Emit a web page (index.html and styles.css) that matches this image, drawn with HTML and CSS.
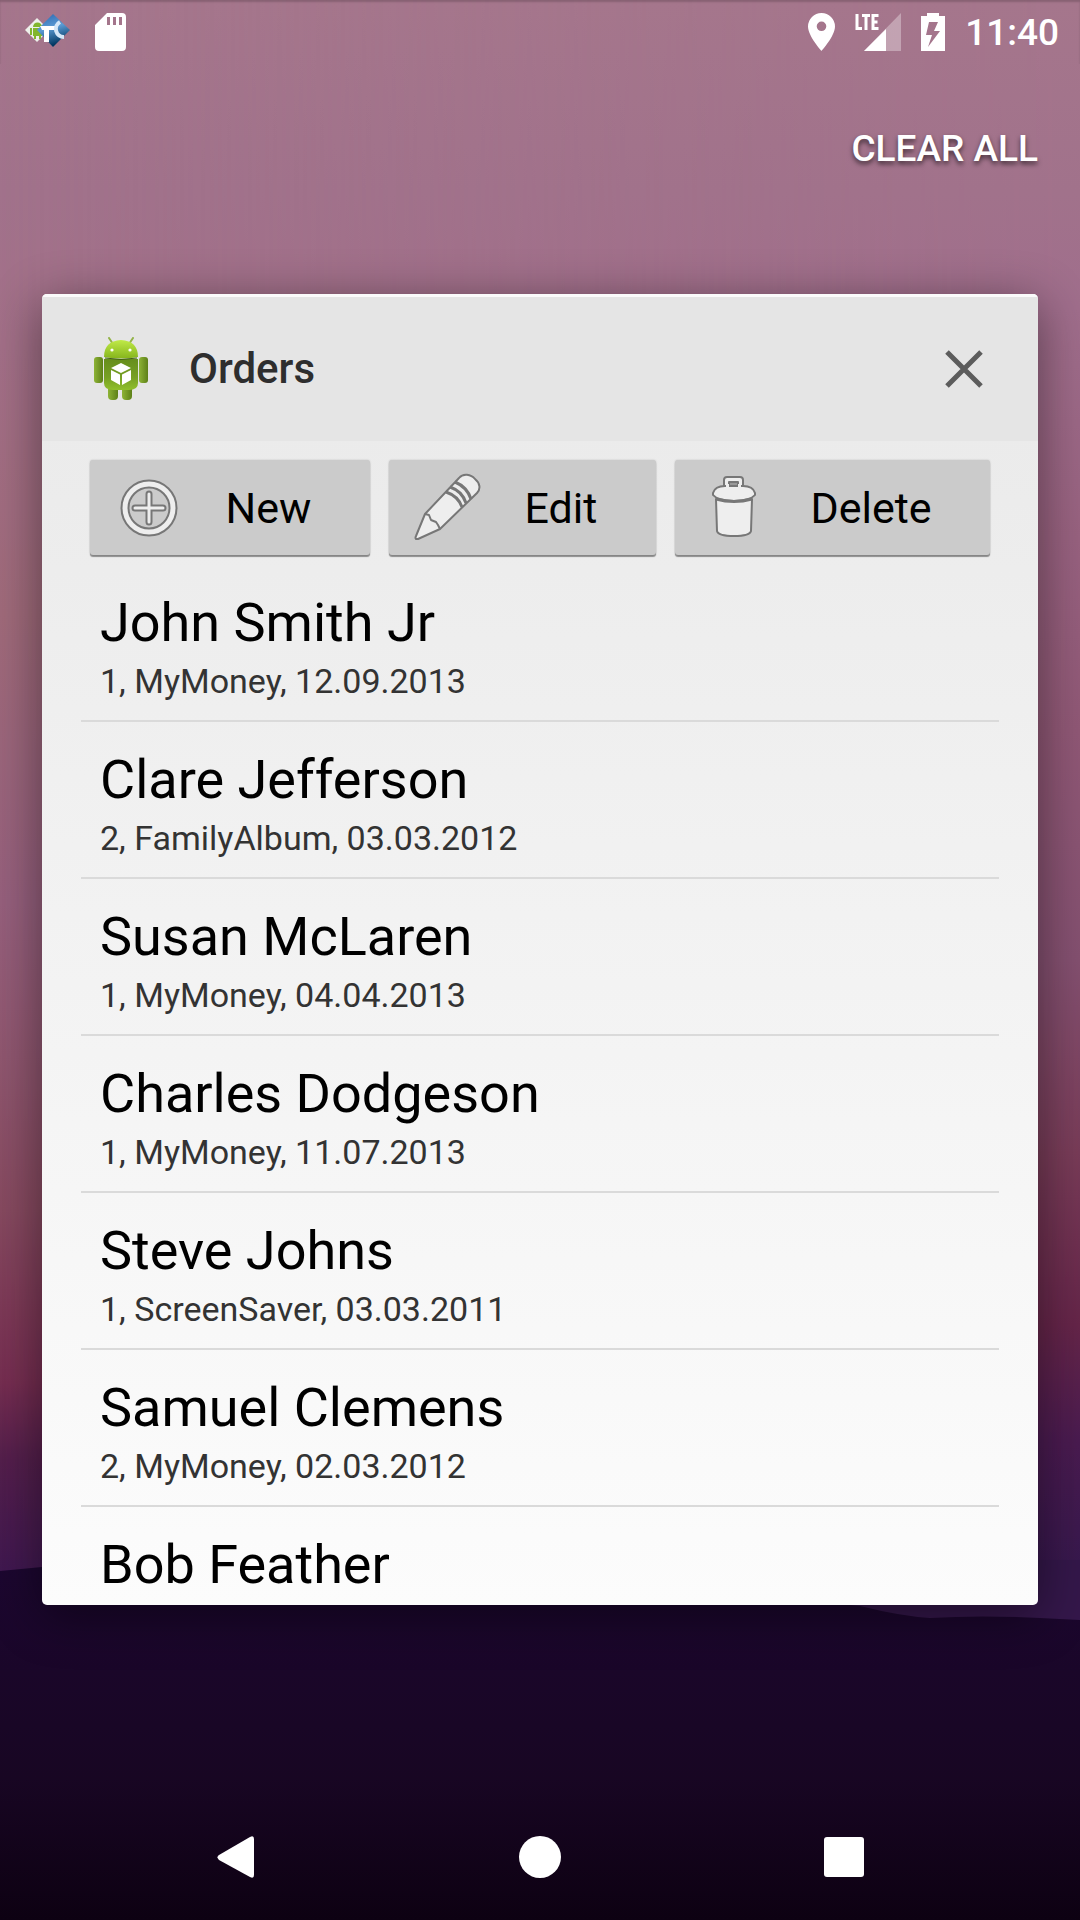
FILE: index.html
```html
<!DOCTYPE html>
<html lang="en">
<head>
<meta charset="utf-8">
<meta name="viewport" content="width=device-width, initial-scale=1">
<title>Recent apps</title>
<link rel="stylesheet" href="styles.css">
</head>
<body>
<svg class="hills" viewBox="0 0 1080 360" preserveAspectRatio="none" aria-hidden="true">
  <defs>
    <linearGradient id="hill" x1="0" y1="0" x2="0" y2="1">
      <stop offset="0" stop-color="#1c0730"/><stop offset="0.3" stop-color="#1a0629"/><stop offset="0.6" stop-color="#180623"/><stop offset="1" stop-color="#0d0112"/>
    </linearGradient>
  </defs>
  <path fill="#34174a" d="M600 0H1080V80H600Z"/>
  <path fill="url(#hill)" d="M0 11L42 7Q300 0 600 20L860 46Q900 56 930 58Q980 55 1040 58L1080 60V360H0Z"/>
</svg>
<div class="screen">
  <header class="status">
    <div class="status-group">
      <svg class="tc" viewBox="0 0 46 36" width="46" height="36" aria-hidden="true">
        <defs>
          <linearGradient id="blue" x1="0" y1="0" x2="0.3" y2="1"><stop offset="0" stop-color="#2864ae"/><stop offset="0.5" stop-color="#5c9bd4"/><stop offset="1" stop-color="#003660"/></linearGradient>
        </defs>
        <path fill="#edf0ea" d="M0 16L12 4L24 16L12 28Z"/>
        <g fill="#82b62c"><path d="M8 13a4.500 4.500 0 0 1 9 0z"/><rect x="8" y="14" width="9" height="8"/><rect x="5" y="14" width="2" height="7"/><rect x="9" y="21" width="2" height="4"/><rect x="14" y="21" width="2" height="4"/></g>
        <path fill="url(#blue)" d="M12 16L28 0L45 16L28 33Z"/>
        <path fill="#fff" d="M15 12H32L30 16H24V28H19V16H17Z"/>
        <path fill="none" stroke="#d5e7f8" stroke-width="4" d="M35 8a8 8 0 0 0 4 15"/>
      </svg>
      <svg viewBox="0 0 31 38" width="31" height="38" aria-hidden="true"><path fill="#fff" fill-rule="evenodd" d="M12 0H27Q31 0 31 4V34Q31 38 27 38H4Q0 38 0 34V12ZM12 4V12H15V4ZM18 4V12H21V4ZM24 4V12H27V4Z"/></svg>
    </div>
    <div class="status-group status-right">
      <svg viewBox="0 0 27 38" width="27" height="38" aria-hidden="true"><path fill="#fff" fill-rule="evenodd" d="M13.500 0A13.500 13.500 0 0 0 0 13.500C0 23 13.500 38 13.500 38S27 23 27 13.500A13.500 13.500 0 0 0 13.500 0ZM13.500 8.500a4.800 4.800 0 1 1 0 9.600a4.800 4.800 0 0 1 0-9.600Z"/></svg>
      <svg viewBox="0 0 46 38" width="46" height="38" role="img" aria-label="LTE signal"><path fill="#fff" opacity=".33" d="M46 0V38H9Z"/><path fill="#fff" d="M31 16V38H9Z"/><path fill="none" stroke="#fff" stroke-width="3" d="M2 1V15.500H7M7 2.500H15M11 2.500V17M23.500 2.500H18V15.500H23.500M18 9H22.500"/></svg>
      <svg viewBox="0 0 24 38" width="24" height="38" role="img" aria-label="Battery charging"><path fill="#fff" fill-rule="evenodd" d="M6 0H18V3H24V38H0V3H6ZM8 9L5 22H11L7 34L19 18H13L17 9Z"/></svg>
      <time class="clock">11:40</time>
    </div>
  </header>
  <div class="actions"><button class="clear" type="button">CLEAR ALL</button></div>
  <main class="card">
    <div class="card-head">
      <svg class="droid" viewBox="0 0 54 64" width="54" height="64" aria-hidden="true">
        <defs>
          <linearGradient id="head" x1="0" y1="0" x2="0" y2="1"><stop offset="0" stop-color="#c0ea48"/><stop offset="1" stop-color="#86b51c"/></linearGradient>
          <linearGradient id="body" x1="0" y1="0" x2="0" y2="1"><stop offset="0" stop-color="#668e1c"/><stop offset="0.600" stop-color="#77a024"/><stop offset="1" stop-color="#90bf2b"/></linearGradient>
          <linearGradient id="limb" x1="0" y1="0" x2="1" y2="0"><stop offset="0" stop-color="#8db336"/><stop offset="1" stop-color="#5d8018"/></linearGradient>
        </defs>
        <path d="M15 1L19 7M39 1L35 7" stroke="#93b348" stroke-width="2" stroke-linecap="round"/>
        <rect x="14" y="48" width="10" height="15" rx="4" fill="url(#limb)"/><rect x="28" y="48" width="10" height="15" rx="4" fill="url(#limb)"/>
        <rect x="0" y="20" width="9" height="26" rx="3" fill="url(#limb)"/><rect x="45" y="20" width="9" height="26" rx="3" fill="url(#limb)"/>
        <path fill="url(#body)" d="M10 22H44V46Q44 53 35 53H19Q10 53 10 46Z"/>
        <path fill="url(#head)" d="M10 20Q10 4 27 3Q44 4 44 20Q27 23 10 20Z"/>
        <path fill="none" stroke="#405f10" d="M11 21Q27 24 43 21"/>
        <circle cx="18" cy="13" r="1.600" fill="#fff"/><circle cx="36" cy="13" r="1.600" fill="#fff"/>
        <path fill="#fff" d="M27 26L37 31L27 36L17 31ZM17 33L26 37.500V48L17 43ZM37 33L28 37.500V48L37 43Z"/>
      </svg>
      <h1 class="title">Orders</h1>
      <button class="close" type="button" aria-label="Close"><svg viewBox="0 0 38 38" width="38" height="38" aria-hidden="true"><path d="M2 2L36 36M36 2L2 36" stroke="#5c5c5c" stroke-width="5"/></svg></button>
    </div>
    <div class="tools">
      <button class="tool" type="button">
        <svg viewBox="0 0 70 70" width="70" height="70" aria-hidden="true"><g fill="none"><circle cx="35" cy="35" r="24" stroke="#777" stroke-width="9"/><circle cx="35" cy="35" r="24" stroke="#eee" stroke-width="5"/><path d="M35 21V49M21 35H49" stroke="#777" stroke-width="7" stroke-linecap="round"/><path d="M35 21V49M21 35H49" stroke="#eee" stroke-width="3" stroke-linecap="round"/></g></svg>
        <span class="tool-label">New</span></button>
      <button class="tool" type="button">
        <svg viewBox="0 0 70 70" width="70" height="70" aria-hidden="true"><g fill="#eee" stroke="#777" stroke-width="2" stroke-linejoin="round"><path d="M3 66Q2 65 3 63L12 41L46 5C50 0 58 1 62 6C67 10 68 16 64 20L27 56L5 66Z"/><path fill="none" d="M12 41L16 42L18 47L23 49L25 52L27 56"/><path fill="none" stroke-width="3" d="M33 19Q45 23 49 34M37 14Q49 18 53 30M42 9Q54 14 58 26"/></g></svg>
        <span class="tool-label">Edit</span></button>
      <button class="tool" type="button">
        <svg viewBox="0 0 70 70" width="70" height="70" aria-hidden="true"><g fill="#eee" stroke="#777" stroke-width="2" stroke-linejoin="round"><path d="M17 26L18 58Q19 63 35 63T52 58L53 26Z"/><path d="M25 14V7Q25 4 28 4H41Q44 4 44 7V14Z"/><path fill="#999" d="M30 9H39V14H30Z"/><path d="M14 20Q16 13 26 13H44Q54 13 56 20V22Q52 27 35 28Q18 27 14 22Z"/></g><path fill="#eee" d="M27 11H30V16H27ZM39 11H42V16H39Z"/><path d="M17 26Q35 31 53 26" fill="none" stroke="#777" stroke-width="3"/></svg>
        <span class="tool-label">Delete</span></button>
    </div>
    <ul class="orders">
      <li class="order"><span class="name">John Smith Jr</span><span class="info">1, MyMoney, 12.09.2013</span></li>
      <li class="order"><span class="name">Clare Jefferson</span><span class="info">2, FamilyAlbum, 03.03.2012</span></li>
      <li class="order"><span class="name">Susan McLaren</span><span class="info">1, MyMoney, 04.04.2013</span></li>
      <li class="order"><span class="name">Charles Dodgeson</span><span class="info">1, MyMoney, 11.07.2013</span></li>
      <li class="order"><span class="name">Steve Johns</span><span class="info">1, ScreenSaver, 03.03.2011</span></li>
      <li class="order"><span class="name">Samuel Clemens</span><span class="info">2, MyMoney, 02.03.2012</span></li>
      <li class="order last"><span class="name">Bob Feather</span></li>
    </ul>
  </main>
  <nav class="nav">
    <button class="nav-btn" type="button" aria-label="Back"><svg viewBox="0 0 42 42" width="42" height="42" aria-hidden="true"><path fill="#fff" d="M4 19L35 1Q39 -1 39 3V39Q39 43 35 41L4 24Q1 21 4 19Z"/></svg></button>
    <button class="nav-btn" type="button" aria-label="Home"><svg viewBox="0 0 42 42" width="42" height="42" aria-hidden="true"><circle cx="21" cy="21" r="21" fill="#fff"/></svg></button>
    <button class="nav-btn" type="button" aria-label="Recent apps"><svg viewBox="0 0 42 42" width="42" height="42" aria-hidden="true"><rect x="1" y="1" width="40" height="40" rx="3" fill="#fff"/></svg></button>
  </nav>
</div>
</body>
</html>
```
FILE: styles.css
```css
* { box-sizing: border-box; }

html { min-height: 100%; }

body {
  margin: 0;
  min-height: 100vh;
  position: relative;
  font-family: Roboto, "Noto Sans", sans-serif;
  background: linear-gradient(#a5768c 0%, #a1728b 10%, #a37088 18%, #a06b7b 32%, #96607d 47%, #905770 55%, #874a60 63%, #762e51 72%, #541f4c 76%, #401850 82%, #0d0112 100%);
}

/* The sunset is cooler and darker towards the right edge */
body::before {
  content: "";
  position: absolute;
  inset: 0;
  background: linear-gradient(#a5768c 0%, #a1728b 10%, #a06e8c 16%, #986280 28%, #905876 38%, #845070 50%, #783c58 60%, #652549 69%, #4a1b50 75%, #36184d 82%, #0d0112 100%);
  mask-image: linear-gradient(to right, transparent, #000);
}

button {
  margin: 0;
  padding: 0;
  border: 0;
  background: none;
  font: inherit;
  color: inherit;
}

svg { display: block; flex: none; }

/* Wallpaper foreground, behind everything else */
.hills {
  position: absolute;
  left: 0;
  bottom: 0;
  width: 100%;
  height: 360px;
}

.screen {
  position: relative;
  display: flex;
  flex-direction: column;
  min-height: 100vh;
}

.status {
  display: flex;
  justify-content: space-between;
  align-items: center;
  height: 64px;
  padding: 0 21px 0 25px;
  box-shadow: inset 0 2px 2px #0000002e;
}

.status-group { display: flex; align-items: center; gap: 24px; }

.status-right { gap: 20px; }

.clock {
  padding-top: 1px;
  color: #fff;
  font-size: 37px;
  font-weight: 500;
  line-height: 44px;
}

.actions {
  display: flex;
  justify-content: flex-end;
  padding: 63px 42px 0 0;
}

.clear {
  color: #fff;
  font-size: 37px;
  font-weight: 500;
  line-height: 44px;
  text-shadow: 0 3px 5px #0009;
}

.card {
  margin: 123px 42px 0;
  border-radius: 5px;
  overflow: hidden;
  background: linear-gradient(#e9e9e9, #fcfcfc);
  box-shadow: 0 10px 50px #0007;
}

.card-head {
  display: flex;
  align-items: center;
  height: 147px;
  padding: 0 55px 0 52px;
  border-top: 3px solid #fafafa;
  background: #e5e5e5;
}

.title {
  flex: 1;
  margin: 0 0 0 41px;
  color: #2e2e2e;
  font-size: 42px;
  font-weight: 500;
  line-height: 48px;
}

.tools {
  display: grid;
  grid-template-columns: 280fr 267fr 315fr;
  gap: 19px;
  padding: 19px 48px 0;
}

.tool {
  display: flex;
  align-items: center;
  height: 95px;
  padding-left: 24px;
  border-radius: 3px;
  background: #cbcbcb;
  color: #000;
  font-size: 43px;
  line-height: 50px;
  box-shadow: 0 2px 1px #0006, 0 0 2px #0003;
}

.tool-label { flex: 1; padding-right: 17px; text-align: center; }

.orders {
  margin: 0;
  padding: 10px 39px 0;
  list-style: none;
}

.order {
  display: flex;
  flex-direction: column;
  height: 157px;
  padding: 26px 19px 0;
  border-bottom: 2px solid #dadada;
}

.last { height: 98px; border-bottom: 0; }

.name { color: #000; font-size: 54px; line-height: 64px; }

.info { color: #333; font-size: 34px; line-height: 52px; }

.nav {
  display: flex;
  justify-content: center;
  gap: 262px;
  margin-top: auto;
  padding-bottom: 42px;
}
```
